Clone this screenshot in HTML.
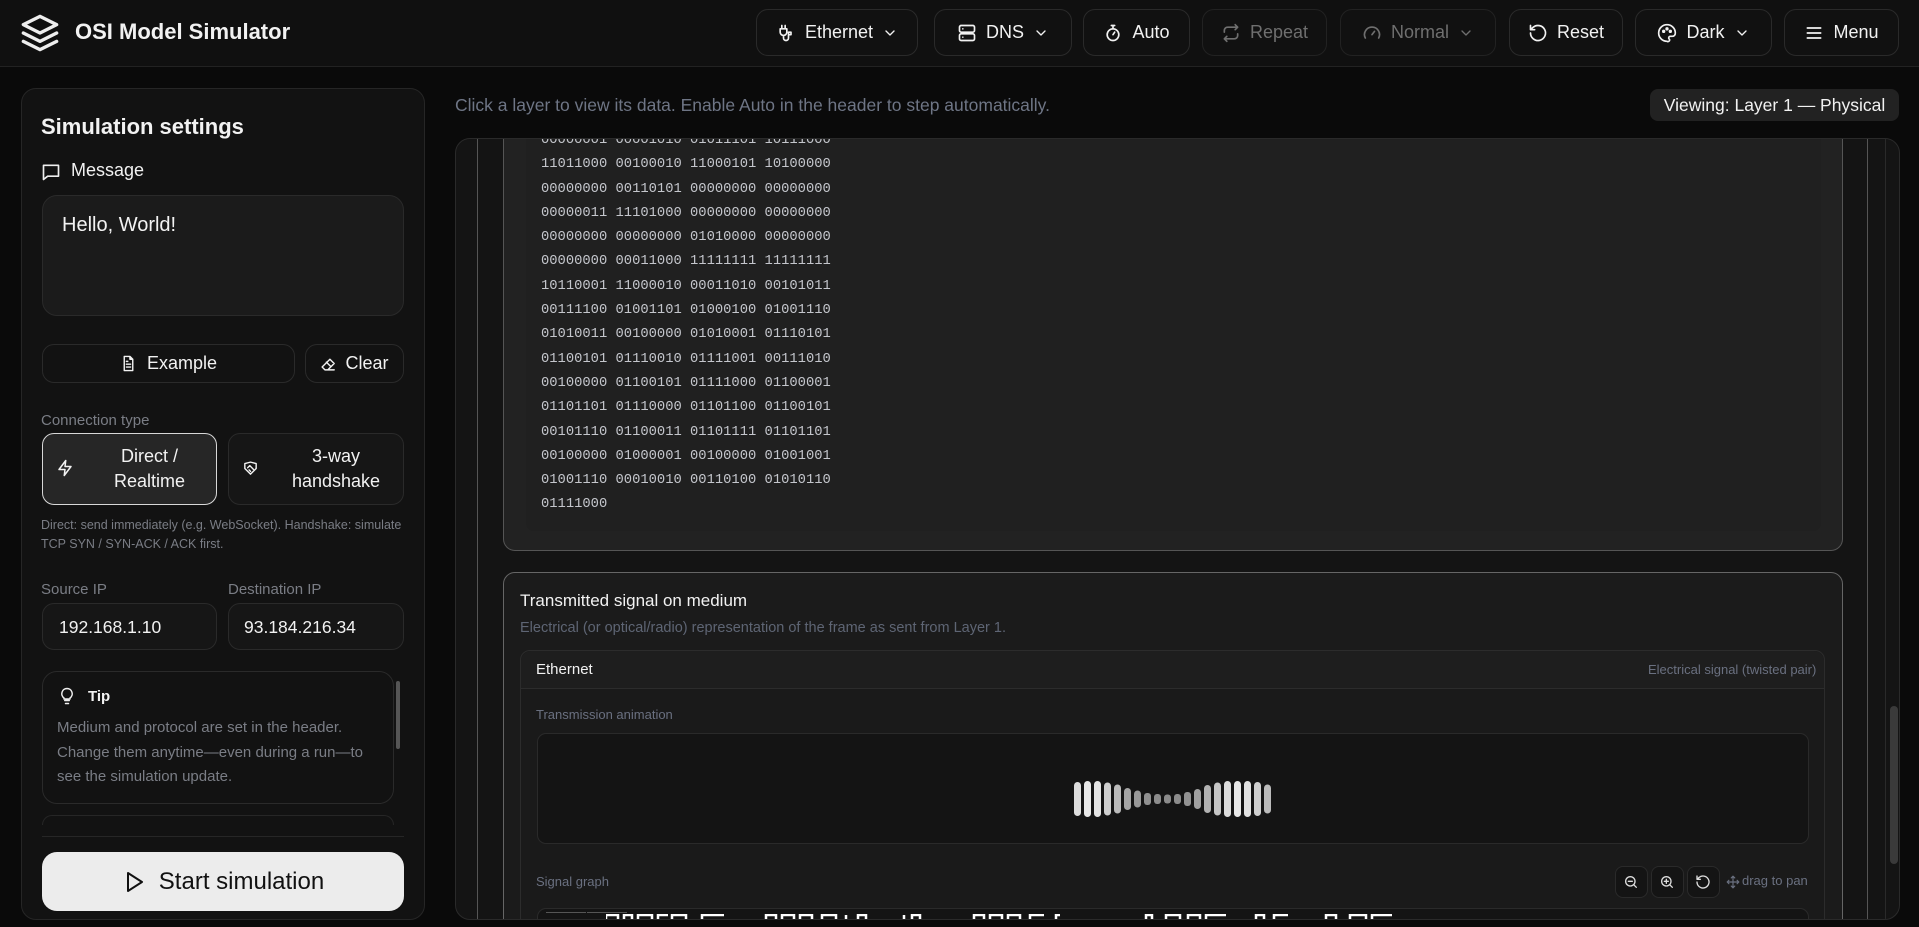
<!DOCTYPE html>
<html><head><meta charset="utf-8"><style>
*{box-sizing:border-box;margin:0;padding:0}
body{width:1919px;height:927px;background:#0a0a0a;font-family:"Liberation Sans",Arial,sans-serif;color:#f2f2f2;overflow:hidden;position:relative}
.abs{position:absolute}
svg{display:block}
.hb{position:absolute;top:9px;height:47px;border:1px solid #2a2a2a;border-radius:12px;background:#111;display:flex;align-items:center;justify-content:center;gap:9px;font-size:18px;color:#f2f2f2}
.hb.dis{color:#6f6f6f;border-color:#222}
.ic{fill:none;stroke:currentColor;stroke-width:2;stroke-linecap:round;stroke-linejoin:round}
.box{position:absolute;border:1px solid #2a2a2a;border-radius:12px;background:#1a1a1a}
.lbl{position:absolute;font-size:15px;color:#7a7d85}
pre{font-family:"Liberation Mono",monospace;font-size:13.8px;line-height:24.3px;color:#c4c6cc}
</style></head><body>
<!-- header -->
<div class="abs" style="left:0;top:0;width:1919px;height:67px;background:#101010;border-bottom:1px solid #222"></div>
<svg class="abs ic" style="left:20px;top:13px;color:#eee" width="40" height="40" viewBox="0 0 24 24" stroke-width="1.8"><path d="M12 2 2 7l10 5 10-5-10-5z"/><path d="m2 12 10 5 10-5"/><path d="m2 17 10 5 10-5"/></svg>
<div class="abs" style="left:75px;top:19px;font-size:22px;font-weight:bold">OSI Model Simulator</div>

<div class="hb" style="left:756px;width:162px"><svg class="ic" width="20" height="20" viewBox="0 0 24 24"><path d="M7 3v4M11 3v4M5 7h8v4a4 4 0 0 1-8 0zM9 15v3a3 3 0 0 0 6 0v-4M15 14h3v-3h-3z"/></svg>Ethernet<svg class="ic" width="16" height="16" viewBox="0 0 24 24"><path d="m6 9 6 6 6-6"/></svg></div>
<div class="hb" style="left:934px;width:138px"><svg class="ic" width="20" height="20" viewBox="0 0 24 24"><rect x="3" y="3" width="18" height="8" rx="2"/><rect x="3" y="13" width="18" height="8" rx="2"/><path d="M7 7h.01M7 17h.01"/></svg>DNS<svg class="ic" width="16" height="16" viewBox="0 0 24 24"><path d="m6 9 6 6 6-6"/></svg></div>
<div class="hb" style="left:1083px;width:107px"><svg class="ic" width="20" height="20" viewBox="0 0 24 24"><circle cx="12" cy="14" r="7"/><path d="M10 3h4M12 14l2-3M12 3v4"/></svg>Auto</div>
<div class="hb dis" style="left:1202px;width:125px"><svg class="ic" width="20" height="20" viewBox="0 0 24 24"><path d="m17 2 3 3-3 3M4 11V9a4 4 0 0 1 4-4h12M7 22l-3-3 3-3M20 13v2a4 4 0 0 1-4 4H4"/></svg>Repeat</div>
<div class="hb dis" style="left:1340px;width:156px"><svg class="ic" width="20" height="20" viewBox="0 0 24 24"><path d="M4 18a9 9 0 1 1 16 0M12 14l3-4"/></svg>Normal<svg class="ic" width="16" height="16" viewBox="0 0 24 24"><path d="m6 9 6 6 6-6"/></svg></div>
<div class="hb" style="left:1509px;width:114px"><svg class="ic" width="20" height="20" viewBox="0 0 24 24"><path d="M3 12a9 9 0 1 0 3-6.7L3 8M3 3v5h5"/></svg>Reset</div>
<div class="hb" style="left:1635px;width:137px"><svg class="ic" width="20" height="20" viewBox="0 0 24 24"><path d="M12 22a10 10 0 1 1 10-10c0 3-2 4-4 4h-2a2 2 0 0 0-1 3.7A2 2 0 0 1 12 22z"/><circle cx="8" cy="10" r="1"/><circle cx="12" cy="7" r="1"/><circle cx="16" cy="10" r="1"/></svg>Dark<svg class="ic" width="16" height="16" viewBox="0 0 24 24"><path d="m6 9 6 6 6-6"/></svg></div>
<div class="hb" style="left:1784px;width:115px"><svg class="ic" width="20" height="20" viewBox="0 0 24 24"><path d="M4 6h16M4 12h16M4 18h16"/></svg>Menu</div>

<!-- left panel -->
<div class="abs" style="left:21px;top:88px;width:404px;height:832px;background:#121212;border:1px solid #262626;border-radius:15px"></div>
<div class="abs" style="left:41px;top:114px;font-size:22px;font-weight:bold">Simulation settings</div>
<svg class="abs ic" style="left:41px;top:162px;color:#eee" width="20" height="20" viewBox="0 0 24 24"><path d="M3 4h18v13H8l-5 4z"/></svg>
<div class="abs" style="left:71px;top:160px;font-size:18px">Message</div>
<div class="box" style="left:42px;top:195px;width:362px;height:121px;background:#1b1b1b;border-radius:15px"></div>
<div class="abs" style="left:62px;top:214px;font-size:20px">Hello, World!</div>
<div class="box" style="left:42px;top:344px;width:253px;height:39px;background:#121212;display:flex;align-items:center;justify-content:center;gap:10px;font-size:18px"><svg class="ic" width="17" height="17" viewBox="0 0 24 24"><path d="M14 2H6v20h12V6zM14 2v4h4M9 13h6M9 17h6M9 9h2"/></svg>Example</div>
<div class="box" style="left:305px;top:344px;width:99px;height:39px;background:#121212;display:flex;align-items:center;justify-content:center;gap:8px;font-size:18px"><svg class="ic" width="17" height="17" viewBox="0 0 24 24"><path d="M7 21 3 17 14 6l6 6-9 9zM9 10l6 6M7 21h13"/></svg>Clear</div>
<div class="lbl" style="left:41px;top:412px">Connection type</div>
<div class="box" style="left:42px;top:433px;width:175px;height:72px;background:#262626;border:1.5px solid #d8d8d8;font-size:18px;line-height:25px;text-align:center;padding:10px 0 0 40px">Direct /<br>Realtime</div>
<svg class="abs ic" style="left:56px;top:459px" width="18" height="18" viewBox="0 0 24 24"><path d="M13 2 4 14h8l-1 8 9-12h-8z"/></svg>
<div class="box" style="left:228px;top:433px;width:176px;height:72px;background:#161616;font-size:18px;line-height:25px;text-align:center;padding:10px 0 0 40px">3-way<br>handshake</div>
<svg class="abs ic" style="left:242px;top:460px" width="17" height="17" viewBox="0 0 24 24"><path d="M4 5l8-2 8 2v7l-8 8-8-8z M8 11l3-3 5 5M10 14l2 2"/></svg>
<div class="abs" style="left:41px;top:516px;font-size:12.5px;line-height:18.5px;color:#7a7d85;width:370px">Direct: send immediately (e.g. WebSocket). Handshake: simulate TCP SYN / SYN-ACK / ACK first.</div>
<div class="lbl" style="left:41px;top:581px">Source IP</div>
<div class="lbl" style="left:228px;top:581px">Destination IP</div>
<div class="box" style="left:42px;top:603px;width:175px;height:47px;background:#161616;font-size:17.5px;padding:13px 0 0 16px">192.168.1.10</div>
<div class="box" style="left:228px;top:603px;width:176px;height:47px;background:#161616;font-size:17.5px;padding:13px 0 0 15px">93.184.216.34</div>
<div class="box" style="left:42px;top:671px;width:352px;height:133px;background:#121212;border-radius:15px"></div>
<svg class="abs ic" style="left:58px;top:686px;color:#eee" width="18" height="20" viewBox="0 0 24 24"><path d="M9 18h6M10 22h4M12 2a7 7 0 0 0-4 12.7V16h8v-1.3A7 7 0 0 0 12 2z"/></svg>
<div class="abs" style="left:88px;top:688px;font-size:15px;font-weight:bold">Tip</div>
<div class="abs" style="left:57px;top:716px;font-size:15px;line-height:24.5px;color:#7a7d85;width:330px">Medium and protocol are set in the header. Change them anytime—even during a run—to see the simulation update.</div>
<div class="abs" style="left:396px;top:681px;width:4px;height:68px;background:#555;border-radius:2px"></div>
<div class="abs" style="left:42px;top:815px;width:352px;height:10px;border:1px solid #262626;border-bottom:none;border-radius:15px 15px 0 0"></div>
<div class="abs" style="left:42px;top:836px;width:362px;height:1px;background:#262626"></div>
<div class="abs" style="left:42px;top:852px;width:362px;height:59px;background:#ececec;border-radius:15px;color:#111;display:flex;align-items:center;justify-content:center;gap:13px;font-size:24px"><svg class="ic" width="24" height="24" viewBox="0 0 24 24" style="color:#111"><path d="M6 3l14 9-14 9z"/></svg>Start simulation</div>

<!-- main -->
<div class="abs" style="left:455px;top:95px;font-size:17.5px;color:#6e7585">Click a layer to view its data. Enable Auto in the header to step automatically.</div>
<div class="abs" style="left:1650px;top:89px;width:249px;height:32px;background:#222;border-radius:8px;font-size:17.5px;display:flex;align-items:center;justify-content:center">Viewing: Layer 1 — Physical</div>

<div class="abs" style="left:455px;top:138px;width:1445px;height:782px;background:#141414;border:1px solid #2a2a2a;border-radius:15px;overflow:hidden">
  <div class="abs" style="left:21px;top:0;width:1px;height:782px;background:#555"></div>
  <div class="abs" style="left:1411px;top:0;width:1px;height:782px;background:#555"></div>
  <div class="abs" style="left:1429px;top:0;width:1px;height:782px;background:#2a2a2a"></div>
  <div class="abs" style="left:1434px;top:567px;width:8px;height:158px;background:#3a3a3a;border-radius:4px"></div>
  <!-- binary card -->
  <div class="abs" style="left:47px;top:-20px;width:1340px;height:432px;background:#222;border:1px solid #555;border-top:none;border-radius:0 0 12px 12px"></div>
  <div class="abs" style="left:70px;top:-20px;width:1295px;height:412px;background:#202020;border-radius:0 0 8px 8px;overflow:hidden">
<pre style="position:absolute;left:15px;top:10px">00000001 00001010 01011101 10111000
11011000 00100010 11000101 10100000
00000000 00110101 00000000 00000000
00000011 11101000 00000000 00000000
00000000 00000000 01010000 00000000
00000000 00011000 11111111 11111111
10110001 11000010 00011010 00101011
00111100 01001101 01000100 01001110
01010011 00100000 01010001 01110101
01100101 01110010 01111001 00111010
00100000 01100101 01111000 01100001
01101101 01110000 01101100 01100101
00101110 01100011 01101111 01101101
00100000 01000001 00100000 01001001
01001110 00010010 00110100 01010110
01111000</pre>
  </div>
  <!-- signal card -->
  <div class="abs" style="left:47px;top:433px;width:1340px;height:400px;background:#1b1b1b;border:1.5px solid #666;border-radius:12px"></div>
  <div class="abs" style="left:64px;top:452px;font-size:17px">Transmitted signal on medium</div>
  <div class="abs" style="left:64px;top:481px;font-size:14.5px;color:#5e6574">Electrical (or optical/radio) representation of the frame as sent from Layer 1.</div>
  <div class="abs" style="left:64px;top:511px;width:1305px;height:300px;background:#1a1a1a;border:1px solid #2c2c2c;border-radius:10px"></div>
  <div class="abs" style="left:65px;top:512px;width:1303px;height:38px;background:#1e1e1e;border-bottom:1px solid #2c2c2c;border-radius:10px 10px 0 0"></div>
  <div class="abs" style="left:80px;top:522px;font-size:15px">Ethernet</div>
  <div class="abs" style="left:1192px;top:523px;font-size:13px;color:#6a7080">Electrical signal (twisted pair)</div>
  <div class="abs" style="left:80px;top:568px;font-size:13px;color:#6a7080">Transmission animation</div>
  <div class="abs" style="left:81px;top:594px;width:1272px;height:111px;background:#141414;border:1px solid #2a2a2a;border-radius:9px"></div>
  <svg class="abs" style="left:618px;top:640px" width="200" height="40">
    <g>
      <rect x="0" y="3" width="7" height="34" rx="3.5" fill="#ddd"/>
      <rect x="10" y="2" width="7" height="36" rx="3.5" fill="#e8e8e8"/>
      <rect x="20" y="2" width="7" height="36" rx="3.5" fill="#e4e4e4"/>
      <rect x="30" y="3.5" width="7" height="33" rx="3.5" fill="#cfcfcf"/>
      <rect x="40" y="5.5" width="7" height="29" rx="3.5" fill="#bbb"/>
      <rect x="50" y="9" width="7" height="22" rx="3.5" fill="#a5a5a5"/>
      <rect x="60" y="11.5" width="7" height="17" rx="3.5" fill="#999"/>
      <rect x="70" y="14" width="7" height="12" rx="3" fill="#909090"/>
      <rect x="80" y="15" width="7" height="10" rx="3" fill="#8c8c8c"/>
      <rect x="90" y="15.5" width="7" height="9" rx="3" fill="#8a8a8a"/>
      <rect x="100" y="15" width="7" height="10" rx="3" fill="#8c8c8c"/>
      <rect x="110" y="13" width="7" height="14" rx="3" fill="#929292"/>
      <rect x="120" y="10" width="7" height="20" rx="3.5" fill="#a0a0a0"/>
      <rect x="130" y="6" width="7" height="28" rx="3.5" fill="#b2b2b2"/>
      <rect x="140" y="3.5" width="7" height="33" rx="3.5" fill="#c5c5c5"/>
      <rect x="150" y="2" width="7" height="36" rx="3.5" fill="#dcdcdc"/>
      <rect x="160" y="2" width="7" height="36" rx="3.5" fill="#e8e8e8"/>
      <rect x="170" y="2" width="7" height="36" rx="3.5" fill="#e2e2e2"/>
      <rect x="180" y="3" width="7" height="34" rx="3.5" fill="#cfcfcf"/>
      <rect x="190" y="5.5" width="7" height="29" rx="3.5" fill="#bbb"/>
    </g>
  </svg>
  <div class="abs" style="left:80px;top:735px;font-size:13px;color:#6a7080">Signal graph</div>
  <div class="abs" style="left:1159px;top:727px;width:33px;height:32px;border:1px solid #2a2a2a;border-radius:8px;background:#141414"></div>
  <div class="abs" style="left:1195px;top:727px;width:33px;height:32px;border:1px solid #2a2a2a;border-radius:8px;background:#141414"></div>
  <div class="abs" style="left:1231px;top:727px;width:33px;height:32px;border:1px solid #2a2a2a;border-radius:8px;background:#141414"></div>
  <svg class="abs ic" style="left:1167px;top:735px;color:#ddd" width="16" height="16" viewBox="0 0 24 24"><circle cx="11" cy="11" r="7"/><path d="m20 20-4-4M8 11h6"/></svg>
  <svg class="abs ic" style="left:1203px;top:735px;color:#ddd" width="16" height="16" viewBox="0 0 24 24"><circle cx="11" cy="11" r="7"/><path d="m20 20-4-4M8 11h6M11 8v6"/></svg>
  <svg class="abs ic" style="left:1239px;top:735px;color:#ddd" width="16" height="16" viewBox="0 0 24 24"><path d="M3 12a9 9 0 1 0 3-6.7L3 8M3 3v5h5"/></svg>
  <svg class="abs ic" style="left:1270px;top:736px;color:#6a7080" width="14" height="14" viewBox="0 0 24 24"><path d="M12 2v20M2 12h20M9 5l3-3 3 3M9 19l3 3 3-3M5 9l-3 3 3 3M19 9l3 3-3 3"/></svg>
  <div class="abs" style="left:1286px;top:734px;font-size:13px;color:#6a7080">drag to pan</div>
  <div class="abs" style="left:81px;top:769px;width:1272px;height:40px;background:#141414;border:1px solid #2a2a2a;border-radius:9px"></div>
  <div class="abs" style="left:90px;top:773px;width:40px;height:1px;background:#555"></div>
  <div class="abs" style="left:131px;top:773px;width:40px;height:1px;background:#555"></div>
  <svg class="abs" style="left:150px;top:775px" width="1120" height="10"><path d="M0 9V1h12v8M18 9V1h8v8h6V1h14v8M52 9V1h10M66 9V1h14v8h16V1h22M160 9V1h10v8h6V1h12v8h6V1h12v8h10V1h14v8h12M240 9V1M252 9V1h8v8M298 9V1M306 9V1h8v8h10M368 9V1h10v8h6V1h12v8h6V1h12v8h10V1h14M450 9V1h4M540 9V1h6v8M560 9V1h14v8h8V1h12v8h6V1h20M650 9V1h8v8h10V1h14M720 9V1h10v8h14V1h16v8h6V1h20" stroke="#fff" stroke-width="2.5" fill="none"/></svg>
</div>
</body></html>
